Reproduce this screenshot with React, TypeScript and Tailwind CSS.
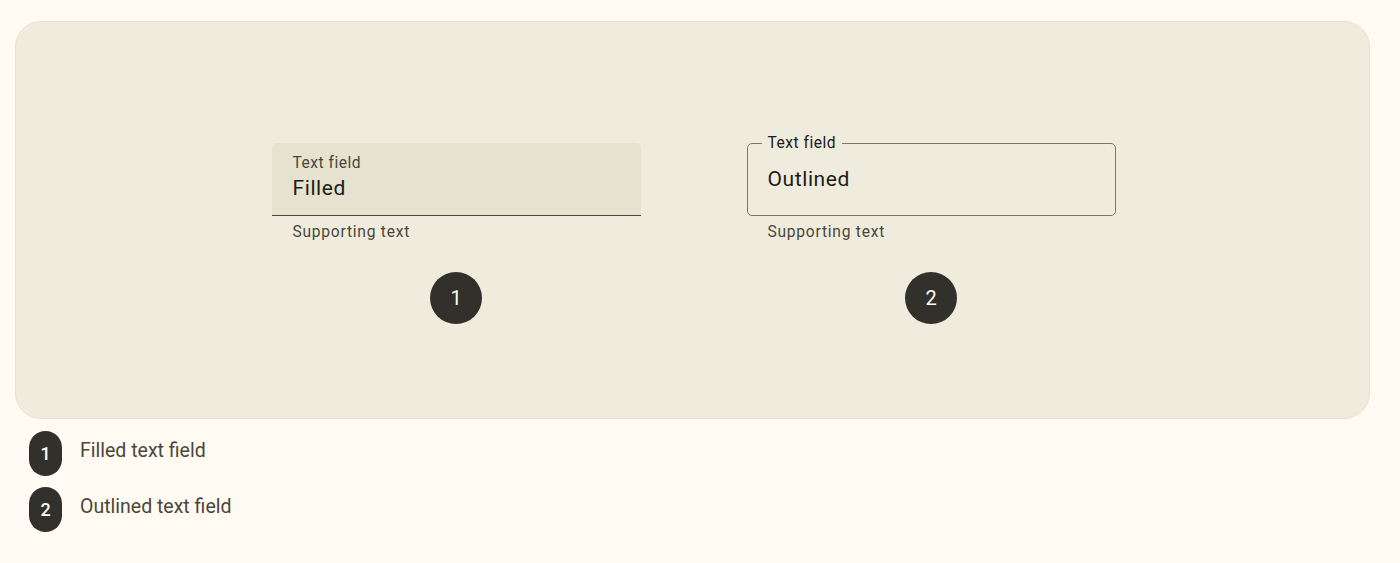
import React from 'react';

const roboto = { fontFamily: 'Roboto, "Noto Sans", sans-serif' };

const Marker: React.FC<{ n: string }> = ({ n }) => (
  <div className="w-[52px] h-[52px] rounded-full bg-[#32302a] text-[#fffbf2] flex items-center justify-center text-[20px] leading-none">
    {n}
  </div>
);

const FilledField: React.FC = () => (
  <div className="flex flex-col items-center w-[369px]">
    <div className="w-full h-[73px] bg-[#e5e2cf] rounded-t-[5px] border-b border-[#4a4739] px-[21px] pt-[10px]">
      <div className="text-[15.6px] leading-[20px] tracking-[0.5px] text-[#4a4739]">Text field</div>
      <div className="text-[21px] leading-[28px] tracking-[0.6px] text-[#1d1c16] mt-[1px]">Filled</div>
    </div>
    <div className="w-full px-[21px] mt-[6px] text-[15.6px] leading-[20px] tracking-[0.75px] text-[#4a4739]">
      Supporting text
    </div>
    <div className="mt-[30px]">
      <Marker n="1" />
    </div>
  </div>
);

const OutlinedField: React.FC = () => (
  <div className="flex flex-col items-center w-[369px]">
    <div className="relative w-full h-[73px] rounded-[5px] border border-[#7a7767] px-[20px] flex items-center">
      <span className="absolute left-[14px] top-[-11px] px-[6px] bg-[#efebdd] text-[15.6px] leading-[20px] tracking-[0.5px] text-[#1d1c16]">
        Text field
      </span>
      <div className="text-[21px] leading-[28px] tracking-[0.6px] text-[#1d1c16] mb-[1px]">Outlined</div>
    </div>
    <div className="w-full px-[21px] mt-[6px] text-[15.6px] leading-[20px] tracking-[0.75px] text-[#4a4739]">
      Supporting text
    </div>
    <div className="mt-[30px]">
      <Marker n="2" />
    </div>
  </div>
);

const LegendRow: React.FC<{ n: string; label: string }> = ({ n, label }) => (
  <div className="flex items-center gap-[18px]">
    <div className="w-[33px] h-[45px] rounded-full bg-[#32302a] text-[#fffbf2] flex items-center justify-center text-[18px] font-medium leading-none">
      {n}
    </div>
    <span className="text-[19.5px] text-[#4a4739] pb-[6px]">{label}</span>
  </div>
);

export default function App() {
  return (
    <div className="min-h-screen w-full bg-[#fffbf2] pt-[21px]" style={roboto}>
      <div className="ml-[15px] w-[1355px] h-[398px] rounded-[26px] bg-[#efebdd] border border-[#e6e2d2] pt-[121px] pl-[2px] flex justify-center gap-[106px]">
        <FilledField />
        <OutlinedField />
      </div>
      <div className="pl-[29px] mt-[12px] flex flex-col gap-[11px]">
        <LegendRow n="1" label="Filled text field" />
        <LegendRow n="2" label="Outlined text field" />
      </div>
    </div>
  );
}
